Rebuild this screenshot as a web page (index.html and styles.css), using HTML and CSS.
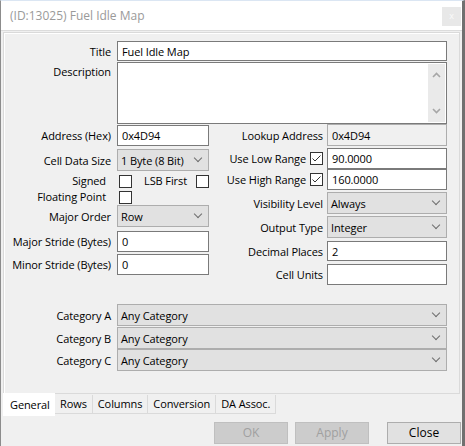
FILE: index.html
```html
<!DOCTYPE html>
<html lang="en">
<head>
  <meta charset="UTF-8">
  <title>(ID:13025) Fuel Idle Map</title>
  <link rel="stylesheet" href="styles.css">
</head>
<body>
  <div class="window">
    <div class="titlebar">
      <span class="caption">(ID:13025) Fuel Idle Map</span>
      <span class="close-x">x</span>
    </div>

    <div class="body">
      <div class="page">
        <div class="row row-title">
          <span class="lbl">Title</span>
          <div class="field wide">Fuel Idle Map</div>
        </div>
        <div class="row row-desc">
          <span class="lbl lbl-top">Description</span>
          <div class="field wide memo">
            <div class="scrollbar">
              <svg width="9" height="6" viewBox="0 0 9 6"><path d="M1 5 L4.5 1.5 L8 5" fill="none" stroke="#a6a6a6" stroke-width="1.6"/></svg>
              <svg width="9" height="6" viewBox="0 0 9 6"><path d="M1 1 L4.5 4.5 L8 1" fill="none" stroke="#a6a6a6" stroke-width="1.6"/></svg>
            </div>
          </div>
        </div>

        <div class="cols">
          <!-- left column -->
          <div class="col col-left">
            <div class="row h21">
              <span class="lbl">Address (Hex)</span>
              <div class="field short">0x4D94</div>
            </div>
            <div class="row h22 mt3">
              <span class="lbl">Cell Data Size</span>
              <div class="combo short">1 Byte (8 Bit)<i class="chev"></i></div>
            </div>
            <div class="row h14 mt3">
              <span class="lbl lbl-cb">Signed</span>
              <div class="checks">
                <span class="box"></span>
                <span class="cb-text">LSB First</span>
                <span class="box"></span>
              </div>
            </div>
            <div class="row h14 mt2">
              <span class="lbl lbl-cb">Floating Point</span>
              <div class="checks"><span class="box"></span></div>
            </div>
            <div class="row h22 mt1">
              <span class="lbl">Major Order</span>
              <div class="combo short">Row<i class="chev"></i></div>
            </div>
            <div class="row h21 mt4">
              <span class="lbl">Major Stride (Bytes)</span>
              <div class="field short">0</div>
            </div>
            <div class="row h21 mt2">
              <span class="lbl">Minor Stride (Bytes)</span>
              <div class="field short">0</div>
            </div>
          </div>

          <!-- right column -->
          <div class="col col-right">
            <div class="row h22">
              <span class="lbl">Lookup Address</span>
              <div class="field mid readonly">0x4D94</div>
            </div>
            <div class="row h21 mt2">
              <span class="lbl">Use Low Range <span class="box checked"></span></span>
              <div class="field mid">90.0000</div>
            </div>
            <div class="row h21">
              <span class="lbl">Use High Range <span class="box checked"></span></span>
              <div class="field mid">160.0000</div>
            </div>
            <div class="row h22 mt2">
              <span class="lbl">Visibility Level</span>
              <div class="combo mid">Always<i class="chev"></i></div>
            </div>
            <div class="row h22 mt2">
              <span class="lbl">Output Type</span>
              <div class="combo mid">Integer<i class="chev"></i></div>
            </div>
            <div class="row h20 mt3">
              <span class="lbl">Decimal Places</span>
              <div class="field mid">2</div>
            </div>
            <div class="row h21 mt3">
              <span class="lbl">Cell Units</span>
              <div class="field mid"></div>
            </div>
          </div>
        </div>

        <div class="cats">
          <div class="row h22">
            <span class="lbl">Category A</span>
            <div class="combo wide">Any Category<i class="chev"></i></div>
          </div>
          <div class="row h22 mt1">
            <span class="lbl">Category B</span>
            <div class="combo wide">Any Category<i class="chev"></i></div>
          </div>
          <div class="row h22">
            <span class="lbl">Category C</span>
            <div class="combo wide">Any Category<i class="chev"></i></div>
          </div>
        </div>
      </div>

      <div class="tabs">
        <span class="tab active">General</span>
        <span class="tab">Rows</span>
        <span class="tab">Columns</span>
        <span class="tab">Conversion</span>
        <span class="tab">DA Assoc.</span>
      </div>

      <div class="buttons">
        <span class="btn disabled">OK</span>
        <span class="btn disabled">Apply</span>
        <span class="btn btn-close">Close</span>
      </div>
    </div>
  </div>
</body>
</html>
```

FILE: styles.css
```css
html, body {
  margin: 0;
  padding: 0;
}

body {
  font-family: "Open Sans", "Noto Sans", sans-serif;
  font-size: 11px;
  letter-spacing: -0.1px;
  color: #000;
  background: #f0f0f0;
}

.window {
  width: 465px;
  height: 446px;
  box-sizing: border-box;
  border-left: 1px solid #8c8c8c;
  border-right: 3px solid #707070;
  border-top: 1px solid #dbe6f3;
  background: #f0f0f0;
  overflow: hidden;
}

/* title bar */
.titlebar {
  height: 29px;
  background: #fff;
  display: flex;
  align-items: center;
  justify-content: space-between;
  padding-left: 9px;
  padding-right: 1px;
  border-bottom: 1px solid #dcdcdc;
}

.caption {
  color: #9a9a9a;
  font-size: 12px;
  letter-spacing: 0;
  margin-top: -1px;
}

.close-x {
  width: 19px;
  height: 19px;
  margin-top: 1px;
  background: #e8e8e8;
  color: #fafafa;
  font-size: 9px;
  text-align: center;
  line-height: 18px;
}

/* tab page */
.body {
  padding-left: 2px;
}

.page {
  width: 457px;
  height: 362px;
  box-sizing: border-box;
  margin-top: 1px;
  border: 1px solid #dadada;
  box-shadow: inset 1px 1px 0 #fff;
  padding-top: 8px;
  padding-left: 1px;
}

.row {
  display: flex;
  align-items: center;
}

.lbl {
  width: 106px;
  flex: none;
  text-align: right;
  margin-right: 6px;
  white-space: nowrap;
}

.lbl-top {
  align-self: flex-start;
  margin-top: 2px;
}

.lbl-cb {
  margin-top: -2px;
}

.h14 { height: 14px; }
.h20 { height: 20px; }
.h21 { height: 21px; }
.h22 { height: 22px; }
.mt1 { margin-top: 1px; }
.mt2 { margin-top: 2px; }
.mt3 { margin-top: 3px; }
.mt4 { margin-top: 4px; }

.row-title { height: 20px; }
.row-desc { height: 62px; margin-top: 1px; }

.field,
.combo {
  box-sizing: border-box;
  height: 100%;
  display: flex;
  align-items: center;
  padding-left: 4px;
  white-space: nowrap;
  position: relative;
  flex: none;
}

.field {
  background: #fff;
  border: 1px solid #7a7a7a;
}

.field.readonly {
  background: #f0f0f0;
  border-color: #adadad;
}

.combo {
  background: #e1e1e1;
  border: 1px solid #adadad;
  padding-left: 3px;
}

.chev {
  position: absolute;
  right: 7px;
  top: 50%;
  width: 5px;
  height: 5px;
  margin-top: -5px;
  border-right: 1px solid #6d6d6d;
  border-bottom: 1px solid #6d6d6d;
  transform: rotate(45deg);
}

.wide { width: 330px; }
.short { width: 92px; }
.mid { width: 120px; }

.memo {
  align-items: stretch;
  justify-content: flex-end;
  padding: 0 1px 0 0;
}

.scrollbar {
  width: 17px;
  margin: 1px 0;
  background: #eaeaea;
  display: flex;
  flex-direction: column;
  justify-content: space-between;
  align-items: center;
  padding: 8px 0 8px;
}

.scrollbar svg { display: block; }

/* columns */
.cols {
  display: flex;
}

.col-left {
  width: 204px;
  flex: none;
  padding-top: 1px;
}

.col-left .lbl-cb { width: 101px; margin-right: 11px; }

.col-right .lbl {
  width: 114px;
  margin-right: 4px;
  display: flex;
  justify-content: flex-end;
  align-items: center;
}

.col-right .lbl .box { margin-left: 4px; }

.checks {
  display: flex;
  align-items: center;
  margin-left: 2px;
  flex: none;
  white-space: nowrap;
}

.cb-text {
  margin-left: 12px;
  margin-right: 9px;
  margin-top: -2px;
}

.box {
  display: inline-block;
  width: 13px;
  height: 13px;
  box-sizing: border-box;
  border: 1px solid #333;
  background: #fff;
  flex: none;
}

.box.checked {
  background: #fff url("data:image/svg+xml,%3Csvg xmlns='http://www.w3.org/2000/svg' width='11' height='11'%3E%3Cpath d='M1.5 5.5 L4 8 L9.5 2.5' fill='none' stroke='%23333' stroke-width='1'/%3E%3C/svg%3E") no-repeat center;
}

.cats {
  margin-top: 19px;
}

/* tabs */
.tabs {
  display: flex;
  align-items: flex-start;
  height: 22px;
  margin-top: -1px;
}

.tab {
  height: 19px;
  box-sizing: border-box;
  padding: 1px 5px 0;
  margin-top: 2px;
  border: 1px solid #dadada;
  border-top: none;
  border-left: none;
  background: #f0f0f0;
  white-space: nowrap;
  line-height: 16px;
}

.tab.active {
  width: 52px;
  height: 23px;
  margin-top: 0;
  padding-top: 4px;
  background: #fff;
  border: none;
  padding-left: 7px;
}

/* buttons */
.buttons {
  display: flex;
  justify-content: flex-end;
  padding-right: 1px;
  margin-top: 7px;
  gap: 7px;
}

.btn {
  width: 74px;
  height: 22px;
  box-sizing: border-box;
  border: 1px solid #adadad;
  background: #e1e1e1;
  text-align: center;
  line-height: 19px;
  font-size: 12px;
  letter-spacing: 0;
}

.btn.disabled {
  background: #cccccc;
  border-color: #bfbfbf;
  color: #a0a0a0;
}

.btn-close { margin-left: 11px; }
```
